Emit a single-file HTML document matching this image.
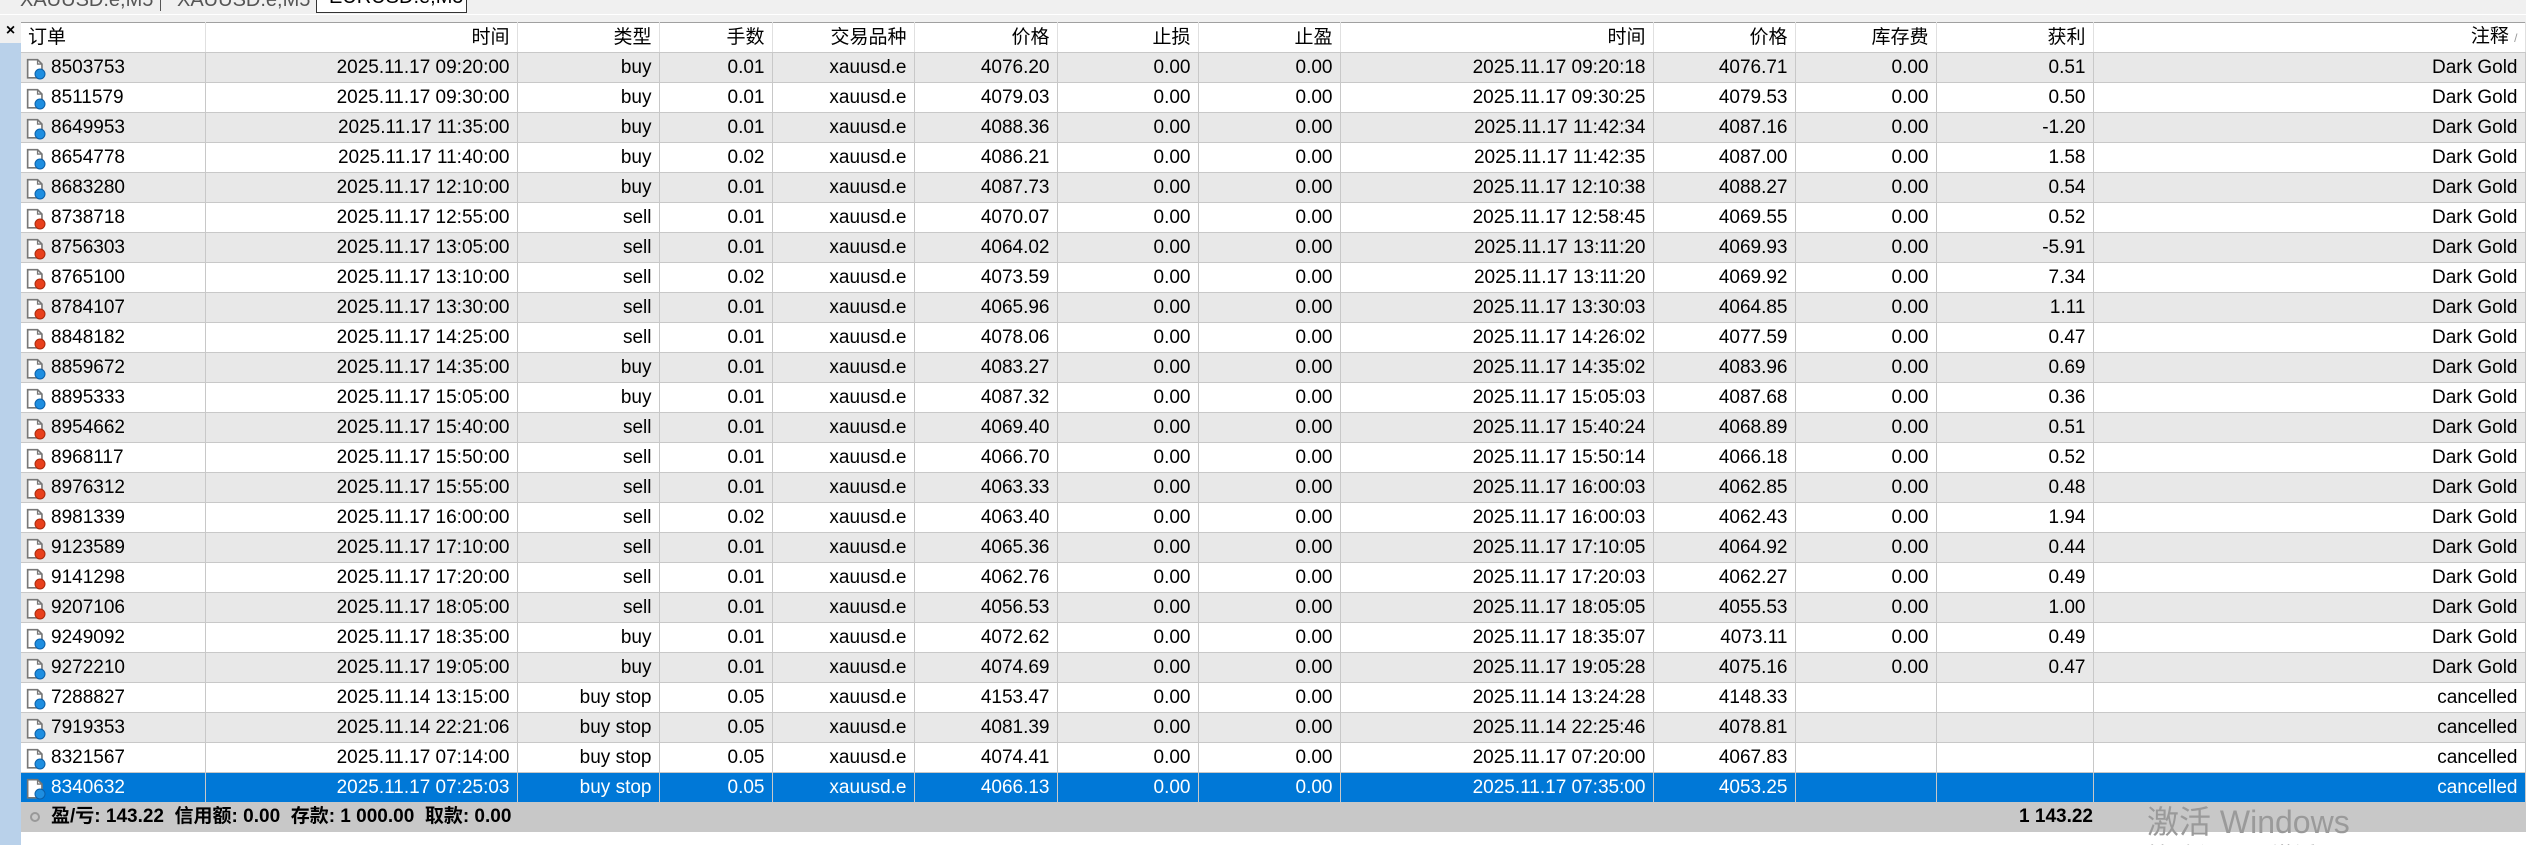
<!DOCTYPE html>
<html><head><meta charset="utf-8"><style>
*{margin:0;padding:0;box-sizing:border-box}
html{width:2526px;height:845px;overflow:hidden}
body{width:2526px;height:845px;background:#fff;position:relative;overflow:hidden;font-family:"Liberation Sans","Noto Sans CJK SC",sans-serif;font-size:19px;color:#000}
.top{position:absolute;left:0;top:0;width:2526px;height:22px;background:#f0f0f0}
.top .ln{position:absolute;left:0;top:14px;width:2526px;height:1px;background:#fff}
.tab{position:absolute;top:-11px;font-size:20px;color:#555;white-space:nowrap}
.act{position:absolute;left:316px;top:-2px;width:151px;height:15px;background:#fff;border:1px solid #333;overflow:hidden}
.strip{position:absolute;left:0;top:22px;width:21px;height:823px;background:#b9d1ea}
.strip .g{position:absolute;left:0;top:0;width:21px;height:21px;background:#f0f0f0;font-weight:bold;font-size:16px;text-align:center;line-height:18px}
table{position:absolute;left:21px;top:22px;border-collapse:collapse;table-layout:fixed;width:2504px;border-top:1px solid #a0a0a0}
td{height:30px;border-right:1px solid #c8c8c8;border-bottom:1px solid #c8c8c8;text-align:right;padding:0 7px 0 0;white-space:nowrap;overflow:hidden;line-height:28px}
td:first-child{text-align:left;padding-left:30px;position:relative}
tr.h td{background:#fff;border-right-color:#e0e0e0}
tr.h td:first-child{padding-left:7px}
tr:nth-child(even) td{background:#e8e8e8}
tr.sel td{background:#0078d7;color:#fff}
svg.ic{position:absolute;left:5px;top:5px}
.foot{position:absolute;left:21px;top:802px;width:2505px;height:30px;background:#c8c8c8;font-weight:bold;line-height:30px}
.foot .t{position:absolute;left:30px}
.foot .p{position:absolute;right:433px}
.dot{position:absolute;left:9px;top:10px;width:10px;height:10px;border-radius:50%;border:2px solid #999}
.win{position:absolute;left:2147px;top:797px;font-size:32px;color:#9a9a9a}
.win2{position:absolute;left:2147px;top:838px;font-size:22px;color:#aaa}
</style></head><body>
<div class="top"><div class="ln"></div>
<div class="tab" style="left:20px">XAUUSD.e,M5</div>
<div style="position:absolute;left:160px;top:0;width:1px;height:11px;background:#555"></div>
<div class="tab" style="left:177px">XAUUSD.e,M5</div>
<div class="act"><div class="tab" style="left:12px;top:-13px;color:#000">EURUSD.e,M5</div></div>
</div>
<div class="strip"><div class="g">×</div></div>
<svg width="0" height="0" style="position:absolute"><defs>
<symbol id="doc" viewBox="0 0 20 20"><path d="M1.5 1.5h9l4 4v12.5h-13z" fill="#fff" stroke="#777" stroke-width="1.5"/><path d="M10.5 1.5v4h4" fill="none" stroke="#777" stroke-width="1.2"/></symbol>
</defs></svg>
<table>
<colgroup><col style="width:184px"><col style="width:312px"><col style="width:142px"><col style="width:113px"><col style="width:142px"><col style="width:143px"><col style="width:141px"><col style="width:142px"><col style="width:313px"><col style="width:142px"><col style="width:141px"><col style="width:157px"><col style="width:432px"></colgroup>
<tr class="h"><td>订单</td><td>时间</td><td>类型</td><td>手数</td><td>交易品种</td><td>价格</td><td>止损</td><td>止盈</td><td>时间</td><td>价格</td><td>库存费</td><td>获利</td><td>注释 <span style="color:#999;font-size:12px">/</span></td></tr>
<tr><td><svg class="ic" width="22" height="22"><use href="#doc"/><circle cx="14" cy="16" r="5" fill="#1e8ee0" stroke="#0b5fa8"/></svg>8503753</td><td>2025.11.17 09:20:00</td><td>buy</td><td>0.01</td><td>xauusd.e</td><td>4076.20</td><td>0.00</td><td>0.00</td><td>2025.11.17 09:20:18</td><td>4076.71</td><td>0.00</td><td>0.51</td><td>Dark Gold</td></tr>
<tr><td><svg class="ic" width="22" height="22"><use href="#doc"/><circle cx="14" cy="16" r="5" fill="#1e8ee0" stroke="#0b5fa8"/></svg>8511579</td><td>2025.11.17 09:30:00</td><td>buy</td><td>0.01</td><td>xauusd.e</td><td>4079.03</td><td>0.00</td><td>0.00</td><td>2025.11.17 09:30:25</td><td>4079.53</td><td>0.00</td><td>0.50</td><td>Dark Gold</td></tr>
<tr><td><svg class="ic" width="22" height="22"><use href="#doc"/><circle cx="14" cy="16" r="5" fill="#1e8ee0" stroke="#0b5fa8"/></svg>8649953</td><td>2025.11.17 11:35:00</td><td>buy</td><td>0.01</td><td>xauusd.e</td><td>4088.36</td><td>0.00</td><td>0.00</td><td>2025.11.17 11:42:34</td><td>4087.16</td><td>0.00</td><td>-1.20</td><td>Dark Gold</td></tr>
<tr><td><svg class="ic" width="22" height="22"><use href="#doc"/><circle cx="14" cy="16" r="5" fill="#1e8ee0" stroke="#0b5fa8"/></svg>8654778</td><td>2025.11.17 11:40:00</td><td>buy</td><td>0.02</td><td>xauusd.e</td><td>4086.21</td><td>0.00</td><td>0.00</td><td>2025.11.17 11:42:35</td><td>4087.00</td><td>0.00</td><td>1.58</td><td>Dark Gold</td></tr>
<tr><td><svg class="ic" width="22" height="22"><use href="#doc"/><circle cx="14" cy="16" r="5" fill="#1e8ee0" stroke="#0b5fa8"/></svg>8683280</td><td>2025.11.17 12:10:00</td><td>buy</td><td>0.01</td><td>xauusd.e</td><td>4087.73</td><td>0.00</td><td>0.00</td><td>2025.11.17 12:10:38</td><td>4088.27</td><td>0.00</td><td>0.54</td><td>Dark Gold</td></tr>
<tr><td><svg class="ic" width="22" height="22"><use href="#doc"/><circle cx="14" cy="16" r="5" fill="#e8401c" stroke="#a82a0b"/></svg>8738718</td><td>2025.11.17 12:55:00</td><td>sell</td><td>0.01</td><td>xauusd.e</td><td>4070.07</td><td>0.00</td><td>0.00</td><td>2025.11.17 12:58:45</td><td>4069.55</td><td>0.00</td><td>0.52</td><td>Dark Gold</td></tr>
<tr><td><svg class="ic" width="22" height="22"><use href="#doc"/><circle cx="14" cy="16" r="5" fill="#e8401c" stroke="#a82a0b"/></svg>8756303</td><td>2025.11.17 13:05:00</td><td>sell</td><td>0.01</td><td>xauusd.e</td><td>4064.02</td><td>0.00</td><td>0.00</td><td>2025.11.17 13:11:20</td><td>4069.93</td><td>0.00</td><td>-5.91</td><td>Dark Gold</td></tr>
<tr><td><svg class="ic" width="22" height="22"><use href="#doc"/><circle cx="14" cy="16" r="5" fill="#e8401c" stroke="#a82a0b"/></svg>8765100</td><td>2025.11.17 13:10:00</td><td>sell</td><td>0.02</td><td>xauusd.e</td><td>4073.59</td><td>0.00</td><td>0.00</td><td>2025.11.17 13:11:20</td><td>4069.92</td><td>0.00</td><td>7.34</td><td>Dark Gold</td></tr>
<tr><td><svg class="ic" width="22" height="22"><use href="#doc"/><circle cx="14" cy="16" r="5" fill="#e8401c" stroke="#a82a0b"/></svg>8784107</td><td>2025.11.17 13:30:00</td><td>sell</td><td>0.01</td><td>xauusd.e</td><td>4065.96</td><td>0.00</td><td>0.00</td><td>2025.11.17 13:30:03</td><td>4064.85</td><td>0.00</td><td>1.11</td><td>Dark Gold</td></tr>
<tr><td><svg class="ic" width="22" height="22"><use href="#doc"/><circle cx="14" cy="16" r="5" fill="#e8401c" stroke="#a82a0b"/></svg>8848182</td><td>2025.11.17 14:25:00</td><td>sell</td><td>0.01</td><td>xauusd.e</td><td>4078.06</td><td>0.00</td><td>0.00</td><td>2025.11.17 14:26:02</td><td>4077.59</td><td>0.00</td><td>0.47</td><td>Dark Gold</td></tr>
<tr><td><svg class="ic" width="22" height="22"><use href="#doc"/><circle cx="14" cy="16" r="5" fill="#1e8ee0" stroke="#0b5fa8"/></svg>8859672</td><td>2025.11.17 14:35:00</td><td>buy</td><td>0.01</td><td>xauusd.e</td><td>4083.27</td><td>0.00</td><td>0.00</td><td>2025.11.17 14:35:02</td><td>4083.96</td><td>0.00</td><td>0.69</td><td>Dark Gold</td></tr>
<tr><td><svg class="ic" width="22" height="22"><use href="#doc"/><circle cx="14" cy="16" r="5" fill="#1e8ee0" stroke="#0b5fa8"/></svg>8895333</td><td>2025.11.17 15:05:00</td><td>buy</td><td>0.01</td><td>xauusd.e</td><td>4087.32</td><td>0.00</td><td>0.00</td><td>2025.11.17 15:05:03</td><td>4087.68</td><td>0.00</td><td>0.36</td><td>Dark Gold</td></tr>
<tr><td><svg class="ic" width="22" height="22"><use href="#doc"/><circle cx="14" cy="16" r="5" fill="#e8401c" stroke="#a82a0b"/></svg>8954662</td><td>2025.11.17 15:40:00</td><td>sell</td><td>0.01</td><td>xauusd.e</td><td>4069.40</td><td>0.00</td><td>0.00</td><td>2025.11.17 15:40:24</td><td>4068.89</td><td>0.00</td><td>0.51</td><td>Dark Gold</td></tr>
<tr><td><svg class="ic" width="22" height="22"><use href="#doc"/><circle cx="14" cy="16" r="5" fill="#e8401c" stroke="#a82a0b"/></svg>8968117</td><td>2025.11.17 15:50:00</td><td>sell</td><td>0.01</td><td>xauusd.e</td><td>4066.70</td><td>0.00</td><td>0.00</td><td>2025.11.17 15:50:14</td><td>4066.18</td><td>0.00</td><td>0.52</td><td>Dark Gold</td></tr>
<tr><td><svg class="ic" width="22" height="22"><use href="#doc"/><circle cx="14" cy="16" r="5" fill="#e8401c" stroke="#a82a0b"/></svg>8976312</td><td>2025.11.17 15:55:00</td><td>sell</td><td>0.01</td><td>xauusd.e</td><td>4063.33</td><td>0.00</td><td>0.00</td><td>2025.11.17 16:00:03</td><td>4062.85</td><td>0.00</td><td>0.48</td><td>Dark Gold</td></tr>
<tr><td><svg class="ic" width="22" height="22"><use href="#doc"/><circle cx="14" cy="16" r="5" fill="#e8401c" stroke="#a82a0b"/></svg>8981339</td><td>2025.11.17 16:00:00</td><td>sell</td><td>0.02</td><td>xauusd.e</td><td>4063.40</td><td>0.00</td><td>0.00</td><td>2025.11.17 16:00:03</td><td>4062.43</td><td>0.00</td><td>1.94</td><td>Dark Gold</td></tr>
<tr><td><svg class="ic" width="22" height="22"><use href="#doc"/><circle cx="14" cy="16" r="5" fill="#e8401c" stroke="#a82a0b"/></svg>9123589</td><td>2025.11.17 17:10:00</td><td>sell</td><td>0.01</td><td>xauusd.e</td><td>4065.36</td><td>0.00</td><td>0.00</td><td>2025.11.17 17:10:05</td><td>4064.92</td><td>0.00</td><td>0.44</td><td>Dark Gold</td></tr>
<tr><td><svg class="ic" width="22" height="22"><use href="#doc"/><circle cx="14" cy="16" r="5" fill="#e8401c" stroke="#a82a0b"/></svg>9141298</td><td>2025.11.17 17:20:00</td><td>sell</td><td>0.01</td><td>xauusd.e</td><td>4062.76</td><td>0.00</td><td>0.00</td><td>2025.11.17 17:20:03</td><td>4062.27</td><td>0.00</td><td>0.49</td><td>Dark Gold</td></tr>
<tr><td><svg class="ic" width="22" height="22"><use href="#doc"/><circle cx="14" cy="16" r="5" fill="#e8401c" stroke="#a82a0b"/></svg>9207106</td><td>2025.11.17 18:05:00</td><td>sell</td><td>0.01</td><td>xauusd.e</td><td>4056.53</td><td>0.00</td><td>0.00</td><td>2025.11.17 18:05:05</td><td>4055.53</td><td>0.00</td><td>1.00</td><td>Dark Gold</td></tr>
<tr><td><svg class="ic" width="22" height="22"><use href="#doc"/><circle cx="14" cy="16" r="5" fill="#1e8ee0" stroke="#0b5fa8"/></svg>9249092</td><td>2025.11.17 18:35:00</td><td>buy</td><td>0.01</td><td>xauusd.e</td><td>4072.62</td><td>0.00</td><td>0.00</td><td>2025.11.17 18:35:07</td><td>4073.11</td><td>0.00</td><td>0.49</td><td>Dark Gold</td></tr>
<tr><td><svg class="ic" width="22" height="22"><use href="#doc"/><circle cx="14" cy="16" r="5" fill="#1e8ee0" stroke="#0b5fa8"/></svg>9272210</td><td>2025.11.17 19:05:00</td><td>buy</td><td>0.01</td><td>xauusd.e</td><td>4074.69</td><td>0.00</td><td>0.00</td><td>2025.11.17 19:05:28</td><td>4075.16</td><td>0.00</td><td>0.47</td><td>Dark Gold</td></tr>
<tr><td><svg class="ic" width="22" height="22"><use href="#doc"/><circle cx="14" cy="16" r="5" fill="#1e8ee0" stroke="#0b5fa8"/></svg>7288827</td><td>2025.11.14 13:15:00</td><td>buy stop</td><td>0.05</td><td>xauusd.e</td><td>4153.47</td><td>0.00</td><td>0.00</td><td>2025.11.14 13:24:28</td><td>4148.33</td><td></td><td></td><td>cancelled</td></tr>
<tr><td><svg class="ic" width="22" height="22"><use href="#doc"/><circle cx="14" cy="16" r="5" fill="#1e8ee0" stroke="#0b5fa8"/></svg>7919353</td><td>2025.11.14 22:21:06</td><td>buy stop</td><td>0.05</td><td>xauusd.e</td><td>4081.39</td><td>0.00</td><td>0.00</td><td>2025.11.14 22:25:46</td><td>4078.81</td><td></td><td></td><td>cancelled</td></tr>
<tr><td><svg class="ic" width="22" height="22"><use href="#doc"/><circle cx="14" cy="16" r="5" fill="#1e8ee0" stroke="#0b5fa8"/></svg>8321567</td><td>2025.11.17 07:14:00</td><td>buy stop</td><td>0.05</td><td>xauusd.e</td><td>4074.41</td><td>0.00</td><td>0.00</td><td>2025.11.17 07:20:00</td><td>4067.83</td><td></td><td></td><td>cancelled</td></tr>
<tr class="sel"><td><svg class="ic" width="22" height="22"><use href="#doc"/><circle cx="14" cy="16" r="5" fill="#1e8ee0" stroke="#0b5fa8"/></svg>8340632</td><td>2025.11.17 07:25:03</td><td>buy stop</td><td>0.05</td><td>xauusd.e</td><td>4066.13</td><td>0.00</td><td>0.00</td><td>2025.11.17 07:35:00</td><td>4053.25</td><td></td><td></td><td>cancelled</td></tr>
</table>
<div class="foot"><div class="dot"></div><span class="t">盈/亏: 143.22&nbsp; 信用额: 0.00&nbsp; 存款: 1 000.00&nbsp; 取款: 0.00</span><span class="p">1 143.22</span></div>
<div class="win">激活 Windows</div>
<div class="win2">转到"设置"以激活 Windows。</div>
</body></html>
